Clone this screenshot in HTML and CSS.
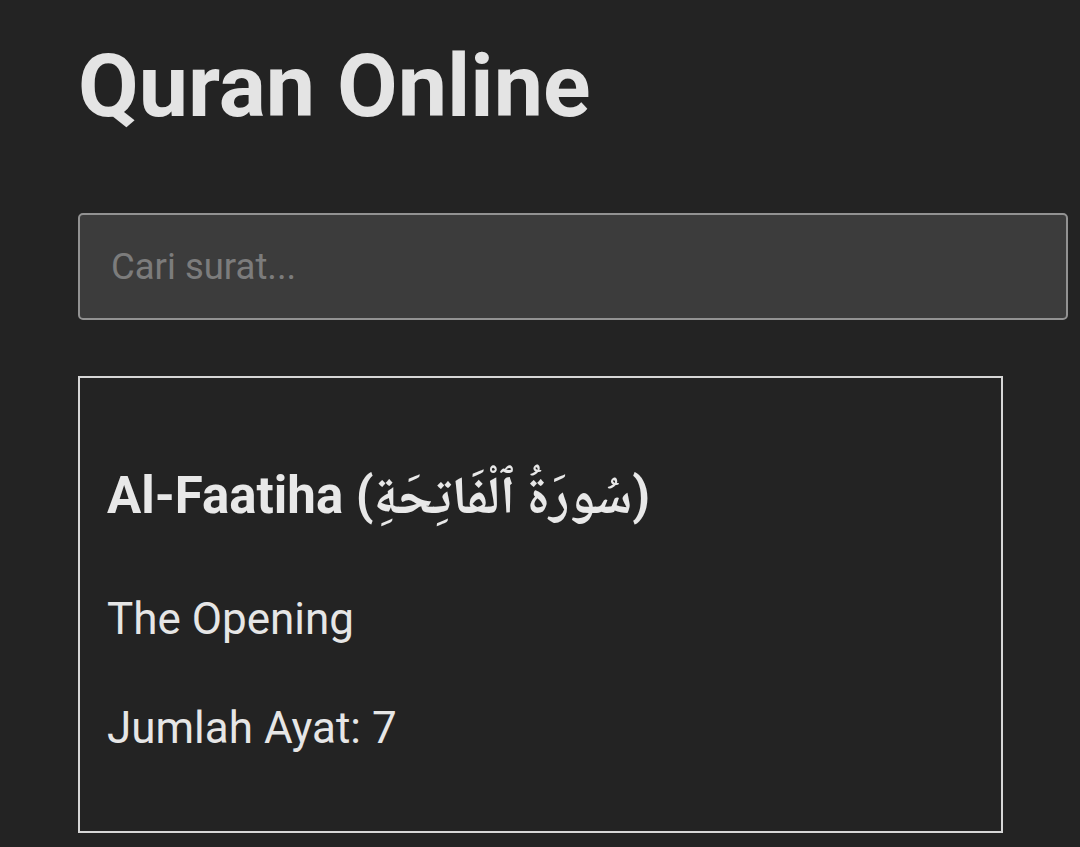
FILE: index.html
```html
<!DOCTYPE html>
<html lang="id">
<head>
<meta charset="utf-8">
<title>Quran Online</title>
<link rel="stylesheet" href="styles.css">
</head>
<body>
<main class="page">
  <h1 class="title">Quran Online</h1>
  <input class="search" type="text" placeholder="Cari surat...">
  <section class="card">
    <h3 class="card-title">Al-Faatiha (<span class="ar" lang="ar">سُورَةُ ٱلْفَاتِحَةِ</span>)</h3>
    <p class="card-text card-sub">The Opening</p>
    <p class="card-text card-count">Jumlah Ayat: 7</p>
  </section>
</main>
</body>
</html>
```

FILE: styles.css
```css
html, body {
  margin: 0;
  padding: 0;
  background: #232323;
}
body {
  font-family: Roboto, "Noto Sans", "Liberation Sans", sans-serif;
  color: #e6e6e6;
}
.page {
  padding: 34px 12px 0 78px;
  display: flex;
  flex-direction: column;
  align-items: flex-start;
}
.title {
  margin: 0;
  font-size: 88px;
  font-weight: 700;
  line-height: normal;
  color: #e4e4e4;
}
.search {
  box-sizing: border-box;
  margin-top: 76px;
  width: 990px;
  height: 107px;
  padding: 0 31px;
  background: #3c3c3c;
  border: 2px solid #929292;
  border-radius: 5px;
  font-family: Roboto, sans-serif;
  font-size: 36.5px;
  color: #e6e6e6;
  outline: none;
}
.search::placeholder {
  color: #7c7c7c;
}
.card {
  box-sizing: border-box;
  margin-top: 56px;
  width: 925px;
  height: 457px;
  border: 2px solid #d6d6d6;
  padding: 88px 27px 0 27px;
}
.card-title {
  margin: 0;
  font-size: 51px;
  font-weight: 700;
  line-height: 60px;
  color: #e8e8e8;
}
.ar {
  font-family: "Noto Naskh Arabic", "Noto Sans Arabic", "DejaVu Sans", sans-serif;
  font-weight: 700;
  font-size: 53px;
  line-height: 0;
}
.card-text {
  margin: 0;
  font-size: 44px;
  line-height: normal;
  color: #e6e6e6;
}
.card-sub {
  margin-top: 67px;
}
.card-count {
  margin-top: 57px;
}
```
